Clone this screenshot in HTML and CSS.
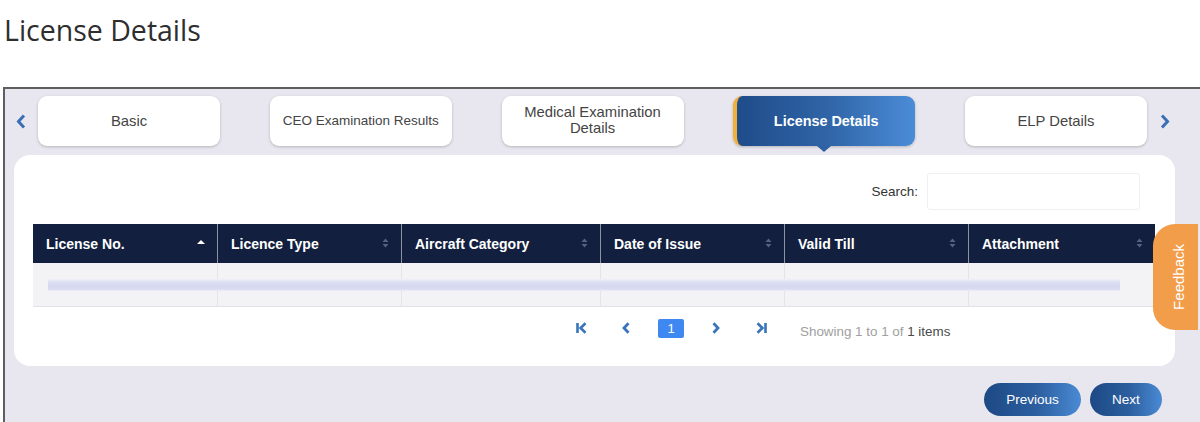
FILE: index.html
```html
<!DOCTYPE html>
<html lang="en">
<head>
<meta charset="utf-8">
<title>License Details</title>
<link rel="stylesheet" href="styles.css">
</head>
<body>
<h1 class="page-title">License Details</h1>

<div class="frame">
  <div class="tabs-row">
    <div class="tab-arrow tab-arrow-left">
      <svg width="10" height="15" viewBox="0 0 10 15"><path d="M8 1.5 L2.5 7.5 L8 13.5" fill="none" stroke="#3a6fb6" stroke-width="3" stroke-linejoin="miter"/></svg>
    </div>
    <div class="tabs">
      <div class="tab">Basic</div>
      <div class="tab tab-compact">CEO Examination Results</div>
      <div class="tab tab-two-line">Medical Examination<br>Details</div>
      <div class="tab tab-active">License Details</div>
      <div class="tab">ELP Details</div>
    </div>
    <div class="tab-arrow tab-arrow-right">
      <svg width="10" height="15" viewBox="0 0 10 15"><path d="M2 1.5 L7.5 7.5 L2 13.5" fill="none" stroke="#3a6fb6" stroke-width="3" stroke-linejoin="miter"/></svg>
    </div>
  </div>

  <div class="card">
    <div class="search-row">
      <label class="search-label" for="search">Search:</label>
      <input class="search-input" id="search" type="text">
    </div>

    <div class="grid">
      <div class="grid-head">
        <div class="th">License No.
          <svg class="sort" width="8" height="10" viewBox="0 0 8 10"><path d="M4 2 L8 6 H0Z" fill="#ffffff"/></svg>
        </div>
        <div class="th">Licence Type
          <svg class="sort" width="7" height="10" viewBox="0 0 7 10"><path d="M3.5 0.5 L6.5 4 H0.5Z M3.5 9.5 L6.5 6 H0.5Z" fill="#56627f"/></svg>
        </div>
        <div class="th">Aircraft Category
          <svg class="sort" width="7" height="10" viewBox="0 0 7 10"><path d="M3.5 0.5 L6.5 4 H0.5Z M3.5 9.5 L6.5 6 H0.5Z" fill="#56627f"/></svg>
        </div>
        <div class="th">Date of Issue
          <svg class="sort" width="7" height="10" viewBox="0 0 7 10"><path d="M3.5 0.5 L6.5 4 H0.5Z M3.5 9.5 L6.5 6 H0.5Z" fill="#56627f"/></svg>
        </div>
        <div class="th">Valid Till
          <svg class="sort" width="7" height="10" viewBox="0 0 7 10"><path d="M3.5 0.5 L6.5 4 H0.5Z M3.5 9.5 L6.5 6 H0.5Z" fill="#56627f"/></svg>
        </div>
        <div class="th">Attachment
          <svg class="sort" width="7" height="10" viewBox="0 0 7 10"><path d="M3.5 0.5 L6.5 4 H0.5Z M3.5 9.5 L6.5 6 H0.5Z" fill="#56627f"/></svg>
        </div>
      </div>
      <div class="grid-body">
        <div class="td"></div>
        <div class="td"></div>
        <div class="td"></div>
        <div class="td"></div>
        <div class="td"></div>
        <div class="td"></div>
        <div class="loading-bar"></div>
      </div>
    </div>

    <div class="pager">
      <div class="pager-btn">
        <svg width="11" height="12" viewBox="0 0 11 12"><path d="M1.5 1 V11 M9.5 1.2 L4.6 6 L9.5 10.8" fill="none" stroke="#3a74bb" stroke-width="2.6"/></svg>
      </div>
      <div class="pager-btn">
        <svg width="8" height="12" viewBox="0 0 8 12"><path d="M6.5 1.2 L2 6 L6.5 10.8" fill="none" stroke="#3a74bb" stroke-width="2.8"/></svg>
      </div>
      <div class="pager-btn"><span class="page-current">1</span></div>
      <div class="pager-btn">
        <svg width="8" height="12" viewBox="0 0 8 12"><path d="M1.5 1.2 L6 6 L1.5 10.8" fill="none" stroke="#3a74bb" stroke-width="2.8"/></svg>
      </div>
      <div class="pager-btn">
        <svg width="11" height="12" viewBox="0 0 11 12"><path d="M9.5 1 V11 M1.5 1.2 L6.4 6 L1.5 10.8" fill="none" stroke="#3a74bb" stroke-width="2.6"/></svg>
      </div>
      <div class="pager-info">Showing 1 to 1 of <span class="pager-total">1 items</span></div>
    </div>
  </div>

  <div class="actions">
    <button class="btn" type="button">Previous</button>
    <button class="btn" type="button">Next</button>
  </div>
</div>

<div class="feedback"><span class="feedback-text">Feedback</span></div>
</body>
</html>
```

FILE: styles.css
```css
html, body {
  margin: 0;
  padding: 0;
  overflow: hidden;
  background: #ffffff;
}

body {
  font-family: "Liberation Sans", Arial, sans-serif;
  color: #333;
  width: 1200px;
  height: 422px;
}

.page-title {
  margin: 0;
  padding: 12px 0 0 4px;
  height: 36px;
  font-family: "Open Sans", "Liberation Sans", sans-serif;
  font-weight: 400;
  font-size: 28.5px;
  line-height: 36px;
  color: #2e2e2e;
}

.frame {
  margin: 39px 0 0 3px;
  border-top: 2px solid #5e5e5e;
  border-left: 2px solid #5e5e5e;
  background: #e8e7ef;
  padding: 7px 0 6px 0;
}

/* Tabs */
.tabs-row {
  display: flex;
  align-items: center;
  height: 50px;
}

.tab-arrow {
  display: flex;
  align-items: center;
  justify-content: center;
  height: 50px;
}

.tab-arrow-left {
  width: 33px;
  padding-right: 2px;
  box-sizing: border-box;
}

.tab-arrow-right {
  width: 14px;
  margin-left: 11px;
}

.tabs {
  display: flex;
  gap: 49.75px;
}

.tab {
  position: relative;
  width: 182px;
  height: 50px;
  box-sizing: border-box;
  background: #ffffff;
  border-radius: 9px;
  box-shadow: 0 1px 3px rgba(0, 0, 0, 0.22);
  display: flex;
  align-items: center;
  justify-content: center;
  text-align: center;
  font-size: 14.8px;
  line-height: 16px;
  color: #444;
}

.tab-compact {
  font-size: 13.5px;
}

.tab-two-line {
  line-height: 16px;
  padding-bottom: 2px;
}

.tab-active {
  background: linear-gradient(90deg, #1f4c8a 0%, #2f64a6 50%, #4b8cd7 100%);
  border-left: 4px solid #f1b03a;
  color: #ffffff;
  font-weight: 700;
  font-size: 14.4px;
  padding-left: 0;
}

.tab-active::after {
  content: "";
  position: absolute;
  left: 50%;
  bottom: -6px;
  margin-left: -9px;
  border-left: 7px solid transparent;
  border-right: 7px solid transparent;
  border-top: 6px solid #2f62a3;
}

/* Card */
.card {
  margin: 9px 25px 0 9px;
  height: 211px;
  box-sizing: border-box;
  background: #ffffff;
  border-radius: 16px;
  padding: 18px 20px 0 19px;
}

.search-row {
  display: flex;
  justify-content: flex-end;
  align-items: center;
  gap: 9px;
  margin-right: 15px;
}

.search-label {
  font-size: 13.5px;
  color: #333;
}

.search-input {
  width: 213px;
  height: 37px;
  box-sizing: border-box;
  border: 1px solid #f0f0f3;
  border-radius: 3px;
  background: #ffffff;
  outline: none;
}

/* Grid */
.grid {
  margin-top: 14px;
}

.grid-head,
.grid-body {
  display: grid;
  grid-template-columns: 185px 184px 199px 184px 184px 186px;
}

.grid-head {
  background: #131f3e;
  height: 39px;
}

.th {
  display: flex;
  align-items: center;
  justify-content: space-between;
  padding: 0 12px 0 13px;
  border-right: 1px solid #8c93a4;
  color: #ffffff;
  font-weight: 700;
  font-size: 14px;
}

.th:last-child {
  border-right: none;
}

.th .sort {
  flex: none;
  margin-top: -2px;
}

.grid-body {
  position: relative;
  height: 43px;
  background: #f3f2f5;
  border-bottom: 1px solid #e2e1e6;
}

.td {
  border-right: 1px solid #e4e3e8;
}

.td:last-child {
  border-right: none;
}

.loading-bar {
  position: absolute;
  left: 15px;
  right: 35px;
  top: 16px;
  height: 12px;
  background: linear-gradient(180deg, #eff0f9 0%, #dcdff2 30%, #d5d8ef 60%, #dadcf1 85%, #eceefa 100%);
}

/* Pager */
.pager {
  display: flex;
  align-items: center;
  height: 20px;
  margin-top: 11px;
  padding-left: 535px;
  gap: 19px;
}

.pager-btn {
  width: 26px;
  height: 20px;
  display: flex;
  align-items: center;
  justify-content: center;
}

.page-current {
  display: flex;
  align-items: center;
  justify-content: center;
  width: 26px;
  height: 19px;
  background: #3f88f2;
  border-radius: 2px;
  color: #ffffff;
  font-size: 13px;
}

.pager-info {
  margin-left: 7px;
  padding-top: 6px;
  font-size: 13.4px;
  color: #a0a0a0;
}

.pager-total {
  color: #4a4a4a;
}

/* Actions */
.actions {
  display: flex;
  justify-content: flex-end;
  gap: 9px;
  margin-top: 17px;
  padding-right: 38px;
}

.btn {
  height: 33px;
  border: none;
  border-radius: 17px;
  background: linear-gradient(90deg, #1d4985 0%, #2c5f9f 55%, #4a8ad4 100%);
  color: #ffffff;
  font-family: "Liberation Sans", Arial, sans-serif;
  font-size: 13.5px;
  padding: 0;
  cursor: pointer;
}

.btn:first-child {
  width: 97px;
}

.btn:last-child {
  width: 72px;
}

/* Feedback tab (floating) */
.feedback {
  position: absolute;
  left: 1153px;
  top: 224px;
  width: 45px;
  height: 106px;
  background: #f19d4a;
  border-radius: 22px 0 0 22px;
  display: flex;
  align-items: center;
  justify-content: center;
}

.feedback-text {
  writing-mode: vertical-rl;
  transform: rotate(180deg);
  color: #ffffff;
  font-size: 15px;
  margin-left: 5px;
}
```
